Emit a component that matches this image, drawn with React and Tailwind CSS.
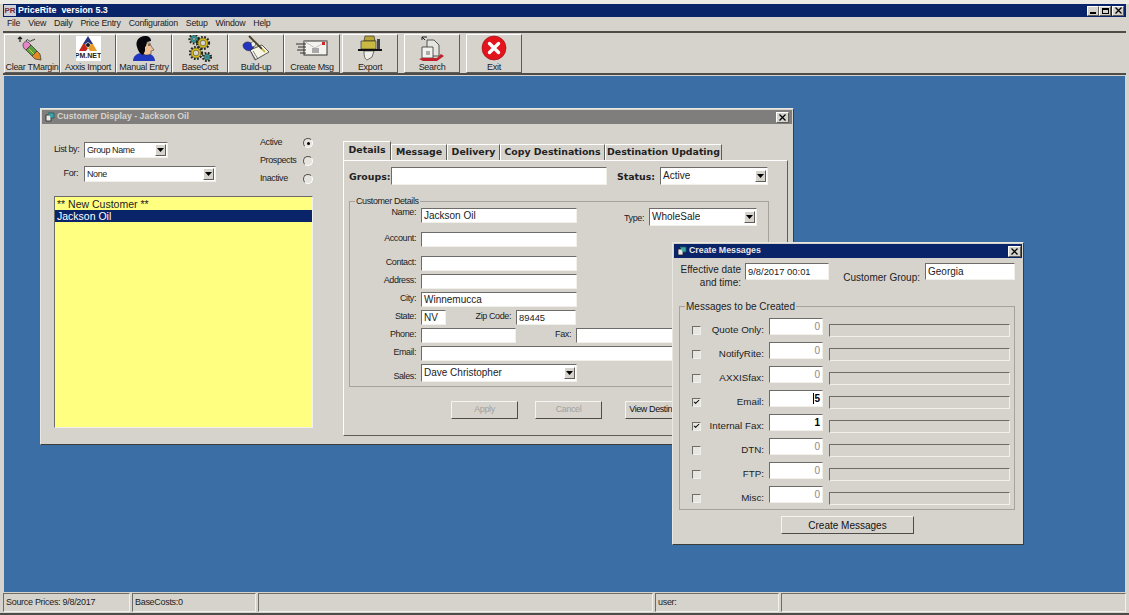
import { Check } from "lucide-react";

const sunken = "border border-t-[#6e6c68] border-l-[#6e6c68] border-r-[#f2f0ea] border-b-[#f2f0ea]";
const raised = "border border-t-white border-l-white border-r-[#5f5d59] border-b-[#5f5d59]";

const menus = ["File", "View", "Daily", "Price Entry", "Configuration", "Setup", "Window", "Help"];

function EraserIcon() {
  return (
    <svg width="34" height="26" viewBox="0 0 34 26">
      <path d="M5 2v5M3 4l2-2 2 2" stroke="#222" strokeWidth="1.2" fill="none" />
      <path d="M11 6c2-4 3 2 5 0s2 0 4-2" stroke="#333" fill="none" />
      <path d="M8 10c0-3 3-4 5-3l3 3-5 5c-2-1-3-3-3-5z" fill="#e884c8" stroke="#333" strokeWidth="0.7" />
      <path d="M11 15l5-5 6 6-5 5z" fill="#5aa03c" stroke="#333" strokeWidth="0.7" />
      <path d="M17 21l5-5 3 3 1 6-6-1z" fill="#e08a24" stroke="#333" strokeWidth="0.7" />
      <path d="M14 14l5 5" stroke="#d8d040" strokeWidth="1" />
    </svg>
  );
}

function AxxisIcon() {
  return (
    <div className="w-[25px] h-[25px] bg-white flex flex-col items-center">
      <svg width="22" height="16" viewBox="0 0 22 16">
        <path d="M11 0l5 8-2.500 0c-.5-2-4.500-2-5 0H6z" fill="#24347e" />
        <path d="M6 8h2.500c0 2 1 3 2.500 4l-2 3H2z" fill="#c4261c" />
        <path d="M16 8h-2.500c0 2-1 3-2.500 4l2 3h7z" fill="#e89a28" />
        <circle cx="11" cy="9" r="2" fill="#1c1c1c" />
      </svg>
      <span className="text-[7px] leading-[8px] font-bold text-[#222]">PM.NET</span>
    </div>
  );
}

function PersonIcon() {
  return (
    <svg width="28" height="26" viewBox="0 0 28 26">
      <path d="M3 26c0-5 4-8 9-8l8 1c3 1 5 4 5 7z" fill="#2038c0" />
      <path d="M11 8h9l1 3 3 4-3 1v3l-3 1h-3l-4-4z" fill="#eec39a" stroke="#222" strokeWidth="0.5" />
      <path d="M7 12C5 6 9 1 15 1c4 0 6 2 6 5l-4 1-1 4-1 1v4l-2 4c-3-1-5-4-6-8z" fill="#08080c" />
      <path d="M18 10h2" stroke="#111" strokeWidth="1" />
    </svg>
  );
}

function Gear({ x, y, r, c }) {
  return (
    <g>
      <circle cx={x} cy={y} r={r} fill="none" stroke="#26261a" strokeWidth="2.2" strokeDasharray="1.7 1.5" />
      <circle cx={x} cy={y} r={r - 1} fill={c} stroke="#26261a" strokeWidth="0.5" />
      <circle cx={x} cy={y} r={r - 3.2} fill="#d6d3cd" stroke="#26261a" strokeWidth="0.5" />
    </g>
  );
}

function GearsIcon() {
  return (
    <svg width="30" height="28" viewBox="0 0 30 28">
      <Gear x={9} y={5} r={4.5} c="#2aa0a8" />
      <Gear x={18} y={9} r={6} c="#d8bc18" />
      <Gear x={11} y={19} r={6} c="#d8bc18" />
      <Gear x={22} y={23} r={4} c="#2aa0a8" />
    </svg>
  );
}

function NotepadIcon() {
  return (
    <svg width="30" height="26" viewBox="0 0 30 26">
      <path d="M9 15l12-5 7 7-14 8z" fill="#f7f6e6" stroke="#333" strokeWidth="0.8" />
      <path d="M10 17l5 8M12 16l5 8" stroke="#4a4a60" strokeWidth="0.7" />
      <path d="M2 10c1-3 5-4 8-2l3 4-3 3c-1 1-3 1-5 0-2-1-3-3-3-5z" fill="#2434c0" stroke="#111" strokeWidth="0.5" />
      <path d="M10 8c2-2 4-2 5 0l-1 3-3 1z" fill="#f0f0f0" stroke="#222" strokeWidth="0.5" />
      <path d="M8 1l13 13" stroke="#4a3f22" strokeWidth="1.8" />
      <path d="M21 14l3 3" stroke="#c8b04a" strokeWidth="1.8" />
    </svg>
  );
}

function EnvelopeIcon() {
  return (
    <svg width="34" height="20" viewBox="0 0 34 20">
      <rect x="9" y="3" width="23" height="14" fill="#f4f3ee" stroke="#333" />
      <path d="M9 3l11 7 12-7" fill="none" stroke="#aaa" strokeWidth="0.7" />
      <rect x="27" y="4" width="3" height="3" fill="#d0262a" />
      <rect x="17" y="10" width="7" height="5" fill="#a9a9a9" />
      <path d="M1 6h10M3 9h8M2 12h9M5 15h6" stroke="#333" />
    </svg>
  );
}

function PrinterIcon() {
  return (
    <svg width="24" height="28" viewBox="0 0 24 28">
      <path d="M7 2h9l1 5H6z" fill="#b8a637" stroke="#222" strokeWidth="0.6" />
      <path d="M3 7h15v8H3z" fill="#c9b841" stroke="#222" strokeWidth="0.6" />
      <path d="M19 5h3v10h-3z" fill="#444" />
      <path d="M0 15h24v2H0z" fill="#111" />
      <path d="M6 17h10l-2 6-5 3c-2-1-3-3-3-9z" fill="#eeeeea" stroke="#222" strokeWidth="0.6" />
    </svg>
  );
}

function SearchIcon() {
  return (
    <svg width="28" height="28" viewBox="0 0 28 28">
      <path d="M4 3h5M4 3v3M4 3l3 3" stroke="#222" fill="none" />
      <path d="M9 6h7l5 5v11H9z" fill="#e4e4e0" stroke="#333" strokeWidth="0.8" />
      <path d="M4 13h11v11H4z" fill="#f2f2ee" stroke="#333" strokeWidth="0.8" />
      <rect x="8" y="17" width="4" height="4" fill="#aaa" />
      <path d="M1 25l4 2h14l7-5-3-2-4 4H4z" fill="#c2202c" />
    </svg>
  );
}

function ExitIcon() {
  return (
    <svg width="26" height="26" viewBox="0 0 26 26">
      <circle cx="13" cy="13" r="12" fill="#e3141c" stroke="#8c1014" strokeWidth="0.6" />
      <path d="M8.5 8.5l9 9M17.5 8.5l-9 9" stroke="#fff" strokeWidth="3.4" strokeLinecap="round" />
    </svg>
  );
}

const toolGroups = [
  [
    { label: "Clear TMargin", icon: <EraserIcon /> },
    { label: "Axxis Import", icon: <AxxisIcon /> },
    { label: "Manual Entry", icon: <PersonIcon /> },
    { label: "BaseCost", icon: <GearsIcon /> },
    { label: "Build-up", icon: <NotepadIcon /> },
    { label: "Create Msg", icon: <EnvelopeIcon /> },
    { label: "Export", icon: <PrinterIcon />, gap: "ml-[2px]" },
  ],
  [{ label: "Search", icon: <SearchIcon /> }],
  [{ label: "Exit", icon: <ExitIcon /> }],
];

function ToolButton({ label, icon, gap = "" }) {
  return (
    <div className={`w-[56px] h-[39px] flex flex-col items-center ${gap} ${raised}`}>
      <div className="h-[27px] flex items-center justify-center overflow-hidden">{icon}</div>
      <span className="text-[9px] tracking-[-0.3px] leading-[10px] whitespace-nowrap text-[#222]">{label}</span>
    </div>
  );
}

function WinIcon() {
  return (
    <svg width="10" height="10" viewBox="0 0 10 10" className="shrink-0">
      <path d="M1 3h5v6H1z" fill="#e8e8e8" stroke="#222" strokeWidth="0.8" />
      <path d="M3 1h6v5H6" fill="#3aa8a8" stroke="#16585c" strokeWidth="0.8" />
    </svg>
  );
}

function CloseBox({ size = "w-[13px] h-[11px]" }) {
  return (
    <div className={`${size} bg-[#d6d3cd] ${raised} flex items-center justify-center`}>
      <svg width="7" height="7" viewBox="0 0 7 7">
        <path d="M0.5 0.5l6 6M6.5 0.5l-6 6" stroke="#000" strokeWidth="1.3" />
      </svg>
    </div>
  );
}

function Combo({ value, className, textSize = "text-[9px] tracking-[-0.4px]" }) {
  return (
    <div className={`bg-white flex items-center justify-between pl-[2px] pr-[1px] ${sunken} ${className}`}>
      <span className={`${textSize} leading-none whitespace-nowrap overflow-hidden text-[#222]`}>{value}</span>
      <div className={`w-[11px] h-[12px] bg-[#d6d3cd] flex items-center justify-center shrink-0 ${raised}`}>
        <svg width="7" height="4" viewBox="0 0 7 4">
          <path d="M0 0h7L3.5 4z" fill="#000" />
        </svg>
      </div>
    </div>
  );
}

function Field({ value, className, textSize = "text-[10px]" }) {
  return (
    <div className={`bg-white flex items-center pl-[2px] overflow-hidden shrink-0 ${sunken} ${className}`}>
      <span className={`${textSize} leading-none text-[#222] whitespace-nowrap`}>{value}</span>
    </div>
  );
}

function Radio({ checked }) {
  return (
    <div className="w-[10px] h-[10px] rounded-full bg-[#e6e4de] border border-t-[#55534f] border-l-[#55534f] border-r-white border-b-white flex items-center justify-center">
      {checked && <div className="w-[3px] h-[3px] rounded-full bg-black" />}
    </div>
  );
}

function RadioRow({ label, checked }) {
  return (
    <div className="h-[18px] flex items-center justify-between w-[53px] text-[9px] tracking-[-0.4px] text-[#222]">
      <span>{label}</span>
      <Radio checked={checked} />
    </div>
  );
}

const tabs = [
  { label: "Message", w: "w-[56px]" },
  { label: "Delivery", w: "w-[53px]" },
  { label: "Copy Destinations", w: "w-[105px]" },
  { label: "Destination Updating", w: "w-[117px]" },
];

function Label({ children, w = "w-[71px]", className = "" }) {
  return <span className={`${w} shrink-0 text-right pr-[5px] text-[9px] tracking-[-0.4px] leading-[10px] text-[#222] ${className}`}>{children}</span>;
}

function DetailRow({ h, children }) {
  return <div className={`${h} flex items-start`}>{children}</div>;
}

function PushButton({ label, disabled, className }) {
  return (
    <div className={`h-[18px] flex items-center justify-center text-[9px] tracking-[-0.4px] whitespace-nowrap overflow-hidden border border-t-[#f5f4f0] border-l-[#f5f4f0] border-r-[#4e4c48] border-b-[#4e4c48] ${disabled ? "text-[#a3a19c]" : "text-[#111]"} ${className}`}>
      {label}
    </div>
  );
}

function CustomerWindow() {
  return (
    <div className="absolute left-[36px] top-[32px] w-[754px] h-[337px] bg-[#d6d3cd] border border-[#e9e7e1] border-b-[#3d3c3a] border-r-[#3d3c3a] flex flex-col">
      <div className="h-[14px] mx-[1px] mt-[1px] bg-[#807e7c] flex items-center gap-[2px] pl-[3px] pr-[3px] shrink-0">
        <WinIcon />
        <span className="text-[#d6d3cd] text-[8.8px] font-bold flex-1 whitespace-nowrap">Customer Display - Jackson Oil</span>
        <CloseBox />
      </div>
      <div className="flex flex-1 pl-[13px] pt-[17px]">
        <div className="w-[260px] shrink-0 flex flex-col">
          <div className="flex justify-between h-[55px]">
            <div className="flex flex-col gap-[8px] pt-[1px]">
              <div className="flex items-center">
                <span className="w-[30px] text-[9px] tracking-[-0.4px] text-[#222]">List by:</span>
                <Combo value="Group Name" className="w-[84px] h-[16px]" />
              </div>
              <div className="flex items-center">
                <span className="w-[30px] text-[9px] tracking-[-0.4px] text-[#222] text-right pr-[6px]">For:</span>
                <Combo value="None" className="w-[132px] h-[16px]" />
              </div>
            </div>
            <div className="flex flex-col mr-[1px] mt-[-7px]">
              <RadioRow label="Active" checked />
              <RadioRow label="Prospects" />
              <RadioRow label="Inactive" />
            </div>
          </div>
          <div className={`w-[259px] h-[232px] bg-[#ffff80] text-[10.5px] leading-[12px] text-[#222] ${sunken} pt-[1px]`}>
            <div className="pl-[2px]">** New Customer **</div>
            <div className="pl-[2px] bg-[#0a246a] text-white">Jackson Oil</div>
          </div>
        </div>
        <div className="ml-[29px] w-[445px] flex flex-col">
          <div className="flex items-end h-[19px] font-['DejaVu_Sans',sans-serif] font-bold text-[9.4px] text-[#222]">
            <div className="w-[48px] h-[19px] flex items-center justify-center border-t border-l border-r border-t-white border-l-white border-r-[#5f5d59] pb-[2px]">Details</div>
            {tabs.map((t) => (
              <div key={t.label} className={`${t.w} h-[16px] flex items-center justify-center whitespace-nowrap border-t border-l border-r border-t-white border-l-white border-r-[#5f5d59]`}>
                {t.label}
              </div>
            ))}
          </div>
          <div className="h-[276px] w-[445px] border border-t-white border-l-white border-r-[#5f5d59] border-b-[#5f5d59] pl-[5px] pt-[6px] flex flex-col">
            <div className="flex items-center h-[18px]">
              <span className="w-[42px] pt-[3px] font-['DejaVu_Sans',sans-serif] font-bold text-[9.4px] text-[#222]">Groups:</span>
              <Field value="" className="w-[216px] h-[18px]" />
              <span className="ml-[2px] w-[51px] pt-[3px] text-right pr-[5px] font-['DejaVu_Sans',sans-serif] font-bold text-[9.4px] text-[#222]">Status:</span>
              <Combo value="Active" className="w-[108px] h-[18px]" textSize="text-[10px]" />
            </div>
            <fieldset className="mt-[12px] w-[420px] h-[190px] border border-[#a5a39e] pt-[2px]">
              <legend className="ml-[5px] text-[9px] tracking-[-0.4px] leading-[9px] px-[1px] text-[#222]">Customer Details</legend>
              <div className="flex flex-col">
                <DetailRow h="h-[24px]">
                  <Label className="mt-[-1px]">Name:</Label>
                  <Field value="Jackson Oil" className="w-[156px] h-[15px]" />
                  <Label w="w-[72px]" className="mt-[5px]">Type:</Label>
                  <Combo value="WholeSale" className="w-[108px] h-[18px]" textSize="text-[10px]" />
                </DetailRow>
                <DetailRow h="h-[24px]">
                  <Label className="mt-[1px]">Account:</Label>
                  <Field value="" className="w-[156px] h-[15px]" />
                </DetailRow>
                <DetailRow h="h-[18px]">
                  <Label className="mt-[1px]">Contact:</Label>
                  <Field value="" className="w-[156px] h-[15px]" />
                </DetailRow>
                <DetailRow h="h-[18px]">
                  <Label className="mt-[1px]">Address:</Label>
                  <Field value="" className="w-[156px] h-[15px]" />
                </DetailRow>
                <DetailRow h="h-[18px]">
                  <Label className="mt-[1px]">City:</Label>
                  <Field value="Winnemucca" className="w-[156px] h-[15px]" />
                </DetailRow>
                <DetailRow h="h-[18px]">
                  <Label className="mt-[1px]">State:</Label>
                  <Field value="NV" className="w-[25px] h-[15px]" />
                  <Label w="w-[70px]" className="mt-[1px]">Zip Code:</Label>
                  <Field value="89445" className="w-[60px] h-[15px]" textSize="text-[9.4px]" />
                </DetailRow>
                <DetailRow h="h-[18px]">
                  <Label className="mt-[1px]">Phone:</Label>
                  <Field value="" className="w-[95px] h-[15px]" />
                  <Label w="w-[60px]" className="mt-[1px]">Fax:</Label>
                  <Field value="" className="w-[181px] h-[15px]" />
                </DetailRow>
                <DetailRow h="h-[18px]">
                  <Label className="mt-[1px]">Email:</Label>
                  <Field value="" className="w-[336px] h-[15px]" />
                </DetailRow>
                <DetailRow h="h-[18px]">
                  <Label className="mt-[7px]">Sales:</Label>
                  <Combo value="Dave Christopher" className="w-[156px] h-[18px]" textSize="text-[10px]" />
                </DetailRow>
              </div>
            </fieldset>
            <div className="flex mt-[14px] pl-[102px]">
              <PushButton label="Apply" disabled className="w-[67px]" />
              <PushButton label="Cancel" disabled className="w-[67px] ml-[17px]" />
              <PushButton label="View Destinations" className="w-[73px] ml-[23px]" />
            </div>
          </div>
        </div>
      </div>
    </div>
  );
}

const messageRows = [
  { label: "Quote Only:", count: "0" },
  { label: "NotifyRite:", count: "0" },
  { label: "AXXISfax:", count: "0" },
  { label: "Email:", count: "5", on: true, caret: true },
  { label: "Internal Fax:", count: "1", on: true },
  { label: "DTN:", count: "0" },
  { label: "FTP:", count: "0" },
  { label: "Misc:", count: "0" },
];

function MessageRow({ label, count, on, caret }) {
  return (
    <div className="h-[24px] flex items-center">
      <div className={`ml-[12px] w-[9px] h-[9px] bg-[#e8e6e0] shrink-0 flex items-center justify-center ${sunken}`}>
        {on && <Check size={8} strokeWidth={3.5} className="text-black" />}
      </div>
      <span className="w-[63px] shrink-0 text-right text-[9.8px] text-[#222] whitespace-nowrap">{label}</span>
      <div className={`ml-[5px] mt-[-8px] w-[54px] h-[17px] bg-white flex items-center justify-end pr-[2px] shrink-0 ${sunken}`}>
        {caret && <div className="w-[1px] h-[11px] bg-black" />}
        <span className={`text-[10px] ${on ? "font-bold text-black" : "text-[#8b8986]"}`}>{count}</span>
      </div>
      <div className={`ml-[6px] w-[181px] h-[13px] ${sunken}`} />
    </div>
  );
}

function MessagesWindow() {
  return (
    <div className="absolute left-[668px] top-[166px] w-[352px] h-[303px] bg-[#d6d3cd] border border-[#e9e7e1] border-b-[#3d3c3a] border-r-[#3d3c3a] flex flex-col">
      <div className="h-[14px] mx-[1px] mt-[1px] bg-[#0a246a] flex items-center gap-[2px] pl-[3px] pr-[1px] shrink-0">
        <WinIcon />
        <span className="text-[#e8e8e8] text-[8.8px] font-bold flex-1 whitespace-nowrap">Create Messages</span>
        <CloseBox />
      </div>
      <div className="flex items-start pl-[5px] pt-[1px] h-[43px] text-[10px] text-[#222]">
        <div className="w-[63px] text-right leading-[13px] pt-[4px] whitespace-nowrap">Effective date<br />and time:</div>
        <Field value="9/8/2017 00:01" className="ml-[4px] mt-[4px] w-[84px] h-[17px]" textSize="text-[9.4px]" />
        <span className="w-[96px] shrink-0 text-right pr-[5px] mt-[11px] whitespace-nowrap">Customer Group:</span>
        <Field value="Georgia" className="mt-[4px] w-[90px] h-[17px]" />
      </div>
      <fieldset className="ml-[6px] w-[336px] h-[209px] border border-[#a5a39e] pt-[1px]">
        <legend className="ml-[5px] px-[1px] text-[10px] leading-[11px] text-[#222]">Messages to be Created</legend>
        <div className="pt-[5px]">
          {messageRows.map((r) => (
            <MessageRow key={r.label} {...r} />
          ))}
        </div>
      </fieldset>
      <PushButton label="Create Messages" className="ml-[108px] mt-[6px] w-[133px] !text-[10px] !tracking-normal" />
    </div>
  );
}

export default function App() {
  return (
    <div className="w-[1129px] h-[615px] overflow-hidden bg-[#d6d3cd] flex flex-col font-['Liberation_Sans',sans-serif] text-black border-t-[4px] border-[#eceae5]">
      {/* Title bar */}
      <div className="h-[13px] mx-[3px] bg-[#0a246a] flex items-center pl-[1px] pr-[2px] shrink-0">
        <div className="w-[12px] h-[11px] bg-[#cfcfd8] text-[8px] leading-[11px] font-bold text-[#7a2c3c] text-center mr-[2px]">PR</div>
        <span className="text-[8.9px] font-bold text-white flex-1 whitespace-pre">PriceRite  version 5.3</span>
        <div className="flex">
          <div className={`w-[12px] h-[10px] bg-[#d6d3cd] ${raised} flex items-end justify-center pb-[1px]`}>
            <div className="w-[6px] h-[2px] bg-black" />
          </div>
          <div className={`w-[12px] h-[10px] bg-[#d6d3cd] ${raised} flex items-center justify-center mr-[1px]`}>
            <div className="w-[7px] h-[6px] border border-black border-t-2" />
          </div>
          <CloseBox size="w-[12px] h-[10px]" />
        </div>
      </div>

      {/* Menu */}
      <div className="h-[14px] flex items-center pl-[7px] gap-[8px] text-[8.8px] tracking-[-0.25px] text-[#222] shrink-0">
        {menus.map((m) => (
          <span key={m}>{m}</span>
        ))}
      </div>

      {/* Toolbar */}
      <div className="h-[44px] mx-[3px] border-t-2 border-b-2 border-[#4e4c48] flex items-center pl-[1px] shrink-0">
        {toolGroups.map((group, i) => (
          <div key={i} className={`flex ${i > 0 ? "ml-[6px]" : ""}`}>
            {group.map((b) => (
              <ToolButton key={b.label} {...b} />
            ))}
          </div>
        ))}
      </div>

      {/* Desktop */}
      <div className="relative flex-1 mx-[4px] mt-[1px] bg-[#3a6ea5] overflow-hidden">
        <CustomerWindow />
        <MessagesWindow />
      </div>

      {/* Status bar */}
      <div className="h-[23px] flex items-center px-[3px] gap-[2px] text-[9px] tracking-[-0.3px] text-[#222] shrink-0 border-b-2 border-[#4e4c48]">
        <div className={`w-[127px] h-[19px] flex items-center pl-[2px] pt-[1px] ${sunken}`}>Source Prices: 9/8/2017</div>
        <div className={`w-[124px] h-[19px] flex items-center pl-[2px] pt-[1px] ${sunken}`}>BaseCosts:0</div>
        <div className={`w-[395px] h-[19px] ${sunken}`} />
        <div className={`w-[124px] h-[19px] flex items-center pl-[2px] pt-[1px] ${sunken}`}>user:</div>
        <div className={`flex-1 h-[19px] ${sunken}`} />
      </div>
    </div>
  );
}
